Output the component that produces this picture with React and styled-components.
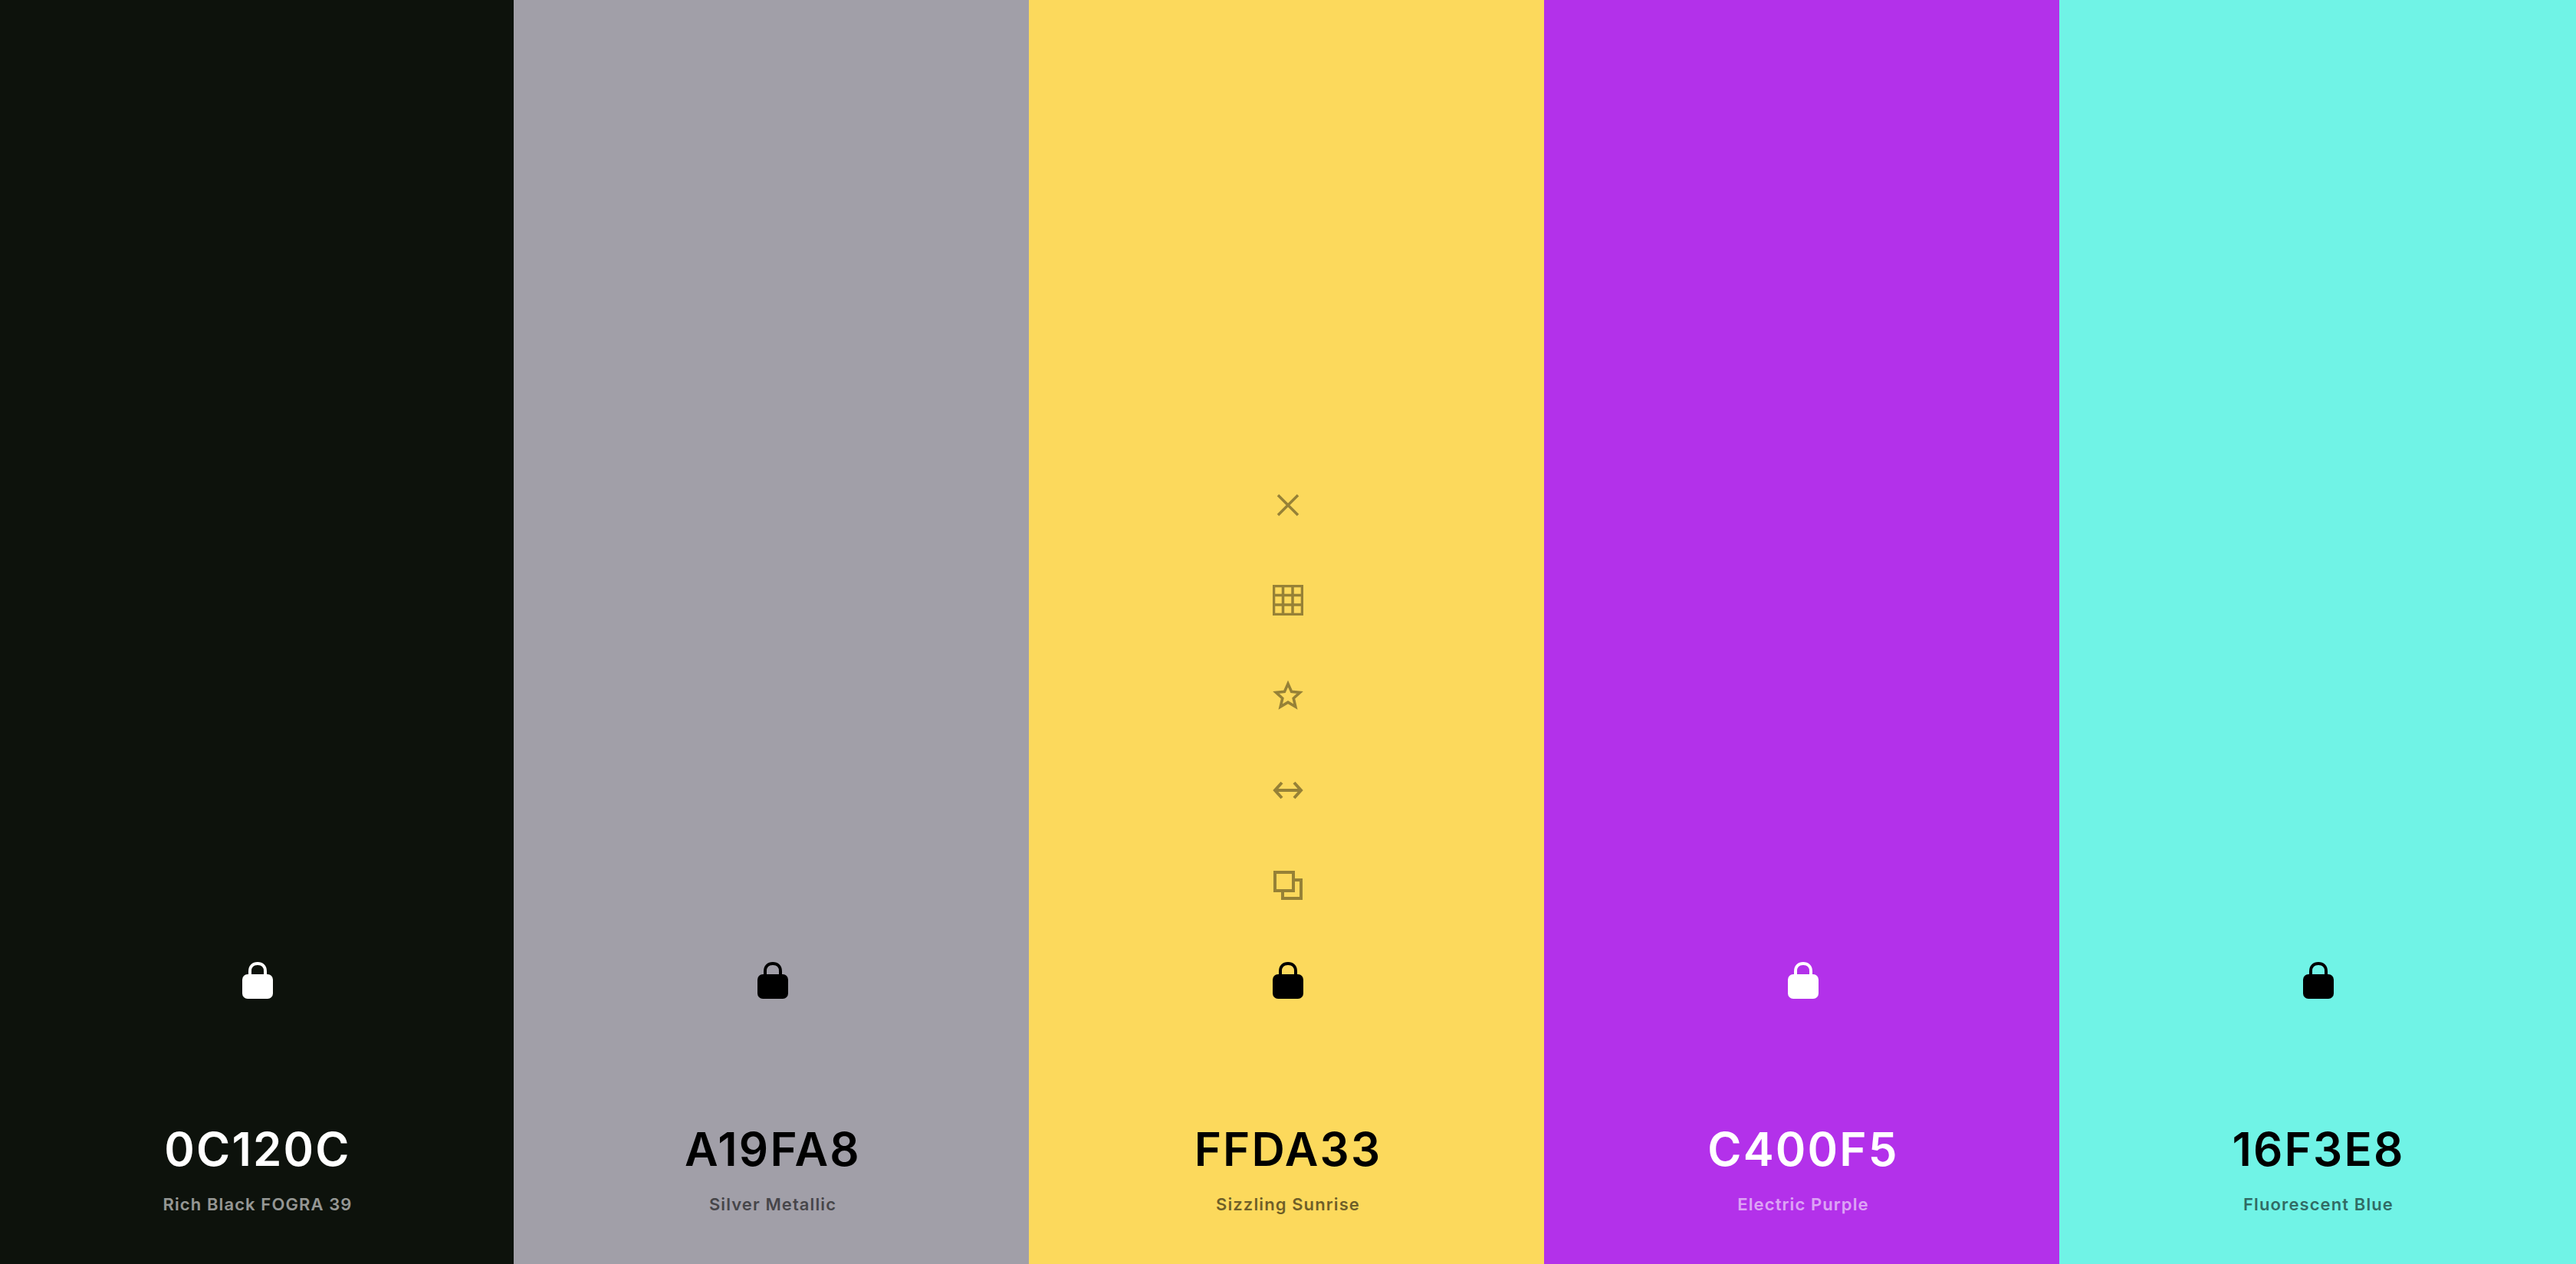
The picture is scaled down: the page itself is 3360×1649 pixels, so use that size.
import React from "react";
import styled, { createGlobalStyle } from "styled-components";

const GlobalStyle = createGlobalStyle`
  html, body {
    margin: 0;
    padding: 0;
    height: 100%;
  }
  body {
    font-family: Inter, "Liberation Sans", sans-serif;
  }
`;

const colors = [
  { hex: "0C120C", name: "Rich Black FOGRA 39", bg: "#0d120c", light: true },
  { hex: "A19FA8", name: "Silver Metallic", bg: "#a19fa8" },
  { hex: "FFDA33", name: "Sizzling Sunrise", bg: "#fcd95c", tools: true },
  { hex: "C400F5", name: "Electric Purple", bg: "#b331ea", light: true },
  { hex: "16F3E8", name: "Fluorescent Blue", bg: "#70f3e6" },
];

const CloseIcon = () => (
  <svg width="30" height="30" viewBox="0 0 30 30" fill="none" stroke="currentColor" strokeWidth="3.5">
    <path d="M2 2L28 28M28 2L2 28" />
  </svg>
);

const GridIcon = () => (
  <svg width="40" height="40" viewBox="0 0 40 40" fill="none" stroke="currentColor" strokeWidth="3.5">
    <path d="M1.5 1.5H38.5V38.5H1.5ZM13.5 1.5V38.5M26 1.5V38.5M1.5 13.5H38.5M1.5 26H38.5" />
  </svg>
);

const StarIcon = () => (
  <svg width="40" height="40" viewBox="0 0 40 40" fill="none" stroke="currentColor" strokeWidth="3.6">
    <path d="M20 5L24.6 15.4L35.6 16.4L27.2 24L29.8 35L20 29.2L10.2 35L12.8 24L4.4 16.4L15.4 15.4Z" />
  </svg>
);

const ArrowsIcon = () => (
  <svg width="40" height="24" viewBox="0 0 40 24" fill="none" stroke="currentColor" strokeWidth="4">
    <path d="M3 12H37M12 2L3 12L12 22M28 2L37 12L28 22" />
  </svg>
);

const CopyIcon = () => (
  <svg width="38" height="38" viewBox="0 0 38 38" fill="none" stroke="currentColor" strokeWidth="4">
    <path d="M2 2H26V26H2ZM26 12H36V36H12V26" />
  </svg>
);

const LockIcon = () => (
  <svg width="40" height="48" viewBox="0 0 40 48" fill="currentColor">
    <path d="M10 17V12C10 6 14 2 20 2C26 2 30 6 30 12V17" fill="none" stroke="currentColor" strokeWidth="4" />
    <rect x="0" y="16" width="40" height="32" rx="7" />
  </svg>
);

const Page = styled.div`
  display: flex;
  width: 3360px;
  height: 1649px;
  overflow: hidden;
`;

const Column = styled.div`
  box-sizing: content-box;
  width: 672px;
  flex: none;
  display: flex;
  flex-direction: column;
  align-items: center;
  justify-content: flex-end;
  padding-bottom: 62px;
  background: ${(p) => p.$bg};
  color: ${(p) => (p.$light ? "#fff" : "#000")};
  /* each colour bleeds 2px over the one before it */
  & + & {
    margin-left: -2px;
    padding-left: 2px;
  }
`;

const Tools = styled.div`
  display: flex;
  flex-direction: column;
  align-items: center;
`;

const ToolButton = styled.div`
  width: 40px;
  height: 40px;
  margin-bottom: 84px;
  display: flex;
  align-items: center;
  justify-content: center;
  opacity: 0.4;
  color: #000;
  &:last-child {
    margin-bottom: 80px;
  }
`;

const Lock = styled.div`
  display: flex;
  height: 48px;
  margin-bottom: 160px;
`;

const Hex = styled.div`
  font-size: 60px;
  line-height: 72px;
  font-weight: 600;
  letter-spacing: 2.2px;
`;

const Name = styled.div`
  margin-top: 20px;
  font-size: 22px;
  line-height: 32px;
  font-weight: 600;
  letter-spacing: 1.1px;
  opacity: 0.56;
`;

export default function App() {
  return (
    <>
      <GlobalStyle />
      <Page>
        {colors.map((c) => (
          <Column key={c.hex} $bg={c.bg} $light={c.light}>
            {c.tools && (
              <Tools>
                <ToolButton><CloseIcon /></ToolButton>
                <ToolButton><GridIcon /></ToolButton>
                <ToolButton><StarIcon /></ToolButton>
                <ToolButton><ArrowsIcon /></ToolButton>
                <ToolButton><CopyIcon /></ToolButton>
              </Tools>
            )}
            <Lock><LockIcon /></Lock>
            <Hex>{c.hex}</Hex>
            <Name>{c.name}</Name>
          </Column>
        ))}
      </Page>
    </>
  );
}
